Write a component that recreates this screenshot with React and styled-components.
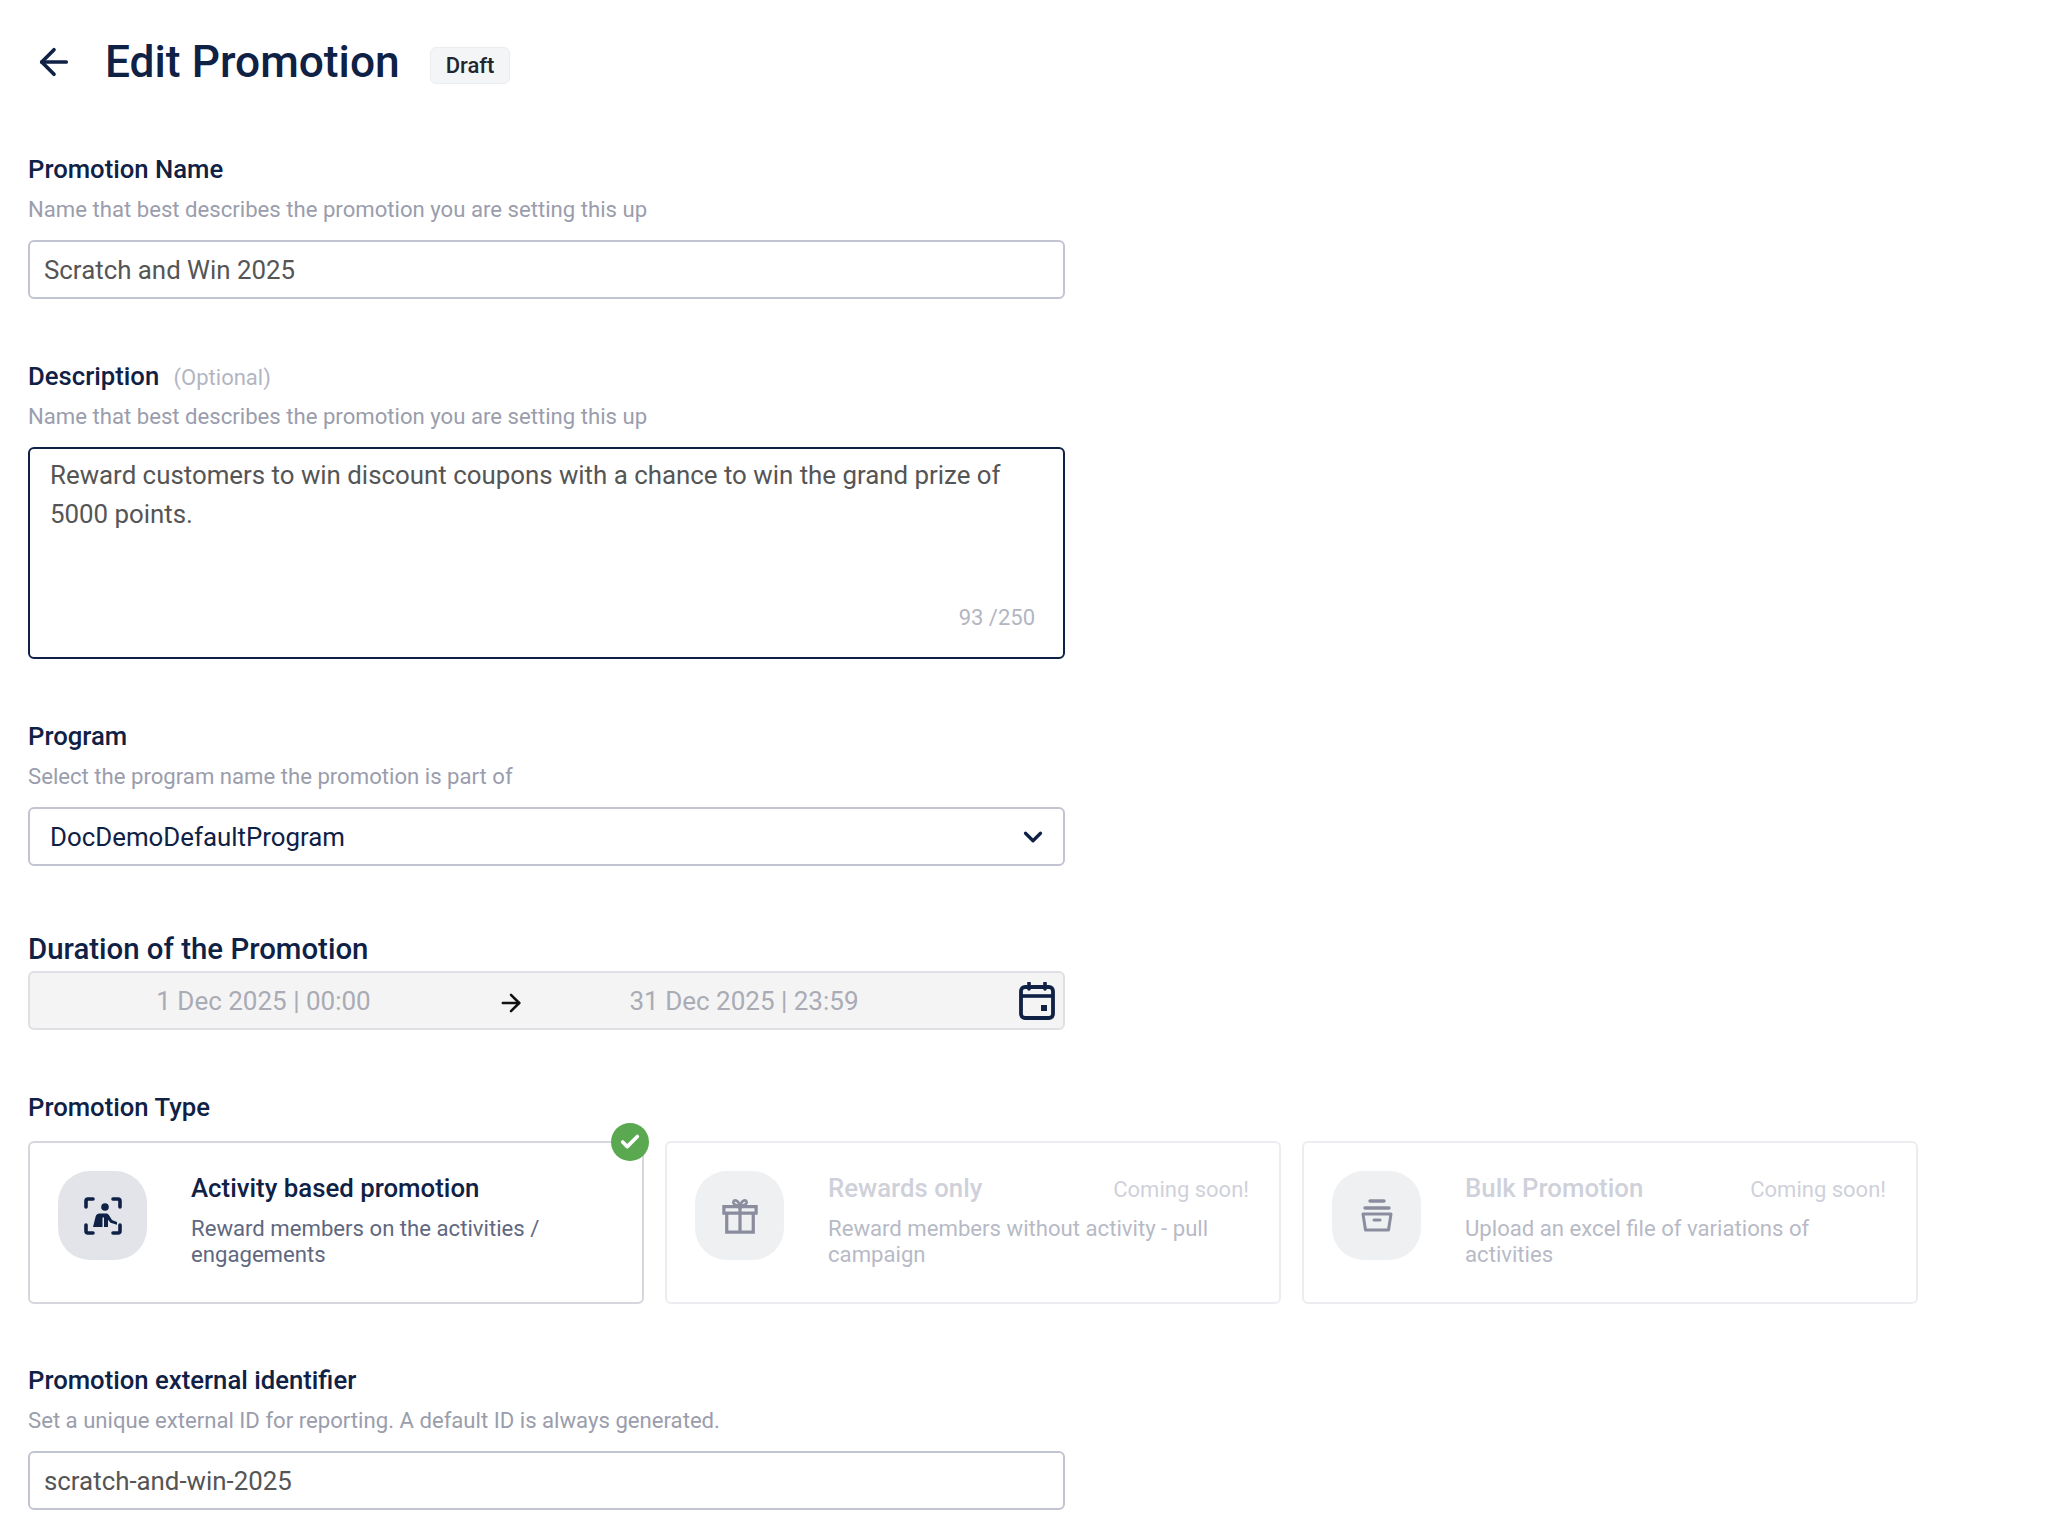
import React from 'react'
import styled, { createGlobalStyle } from 'styled-components'
import { ArrowLeft, ArrowRight, ChevronDown, Check } from 'lucide-react'

const GlobalStyle = createGlobalStyle`
  html, body {
    margin: 0;
    background: #fff;
    font-family: Roboto, "Liberation Sans", sans-serif;
  }
  * { box-sizing: border-box; }
`

const ActivityIcon = () => (
  <svg width="38" height="38" viewBox="0 0 38 38" fill="none">
    <path d="M2 10V4a2 2 0 0 1 2-2h5M29 2h5a2 2 0 0 1 2 2v6M2 28v6a2 2 0 0 0 2 2h5M29 36h5a2 2 0 0 0 2-2v-6" stroke="#0f2145" strokeWidth="3.6" strokeLinecap="round" />
    <circle cx="21" cy="10" r="3.800" fill="#0f2145" />
    <path d="M9 30l2.500-10c.4-2 2-3.500 4-3.500H22c1.400 0 2.400.6 3 1.800l3 4.700 5 2v2.800l-6.500-2-2.500-3V30h-4v-9.500h-1.500V30z" fill="#0f2145" />
  </svg>
)

const GiftIcon = () => (
  <svg width="36" height="38" viewBox="0 0 38 38" fill="none" stroke="#8b8d9f" strokeWidth="3.400">
    <path d="M2 9h34v7H2zM5 16v20h28V16M19 9v27" />
    <path d="M19 9c-2-1-7-1-7-4.500C12 1.500 17 1 19 9zM19 9c2-1 7-1 7-4.500C26 1.500 21 1 19 9z" strokeWidth="2.800" />
  </svg>
)

const ArchiveIcon = () => (
  <svg width="32" height="33" viewBox="0 0 32 33" fill="none" stroke="#8b8d9f" strokeLinecap="round">
    <path d="M9 2h14" strokeWidth="3.400" />
    <path d="M4 9h24" strokeWidth="3.400" />
    <path d="M2 15h28l-2.500 16h-23zM13 21h6" strokeWidth="3" strokeLinejoin="round" />
  </svg>
)

const CalendarIcon = () => (
  <svg width="36" height="38" viewBox="0 0 36 38" fill="none">
    <path d="M10 1v6M26 1v6" stroke="#0f2145" strokeWidth="3.600" strokeLinecap="round" />
    <rect x="2" y="5" width="32" height="31" rx="4" stroke="#0f2145" strokeWidth="3.800" />
    <path d="M2 14h32" stroke="#0f2145" strokeWidth="3.600" />
    <rect x="22" y="23" width="6" height="6" fill="#0f2145" />
  </svg>
)

const promotionTypes = [
  {
    title: 'Activity based promotion',
    text: 'Reward members on the activities / engagements',
    Icon: ActivityIcon,
    selected: true,
  },
  {
    title: 'Rewards only',
    text: 'Reward members without activity - pull campaign',
    Icon: GiftIcon,
  },
  {
    title: 'Bulk Promotion',
    text: 'Upload an excel file of variations of activities',
    Icon: ArchiveIcon,
  },
]

export default function App() {
  return (
    <Page>
      <GlobalStyle />
      <Header>
        <BackButton>
          <ArrowLeft size={42} strokeWidth={2.1} />
        </BackButton>
        <Title>Edit Promotion</Title>
        <Badge>Draft</Badge>
      </Header>

      <Form>
        <Field>
          <Label>Promotion Name</Label>
          <Hint>Name that best describes the promotion you are setting this up</Hint>
          <Input>Scratch and Win 2025</Input>
        </Field>

        <Field>
          <Label>
            Description <Optional>(Optional)</Optional>
          </Label>
          <Hint>Name that best describes the promotion you are setting this up</Hint>
          <TextArea>
            Reward customers to win discount coupons with a chance to win the grand prize of 5000 points.
            <Counter>93 /250</Counter>
          </TextArea>
        </Field>

        <Field>
          <Label>Program</Label>
          <Hint>Select the program name the promotion is part of</Hint>
          <Select>
            DocDemoDefaultProgram
            <ChevronDown size={30} strokeWidth={2.6} color="#0f2145" />
          </Select>
        </Field>

        <Field>
          <SectionLabel>Duration of the Promotion</SectionLabel>
          <DateBox>
            <DateText>1 Dec 2025 | 00:00</DateText>
            <DateArrow>
              <ArrowRight size={28} strokeWidth={2.2} color="#111" />
            </DateArrow>
            <DateText>31 Dec 2025 | 23:59</DateText>
            <CalendarIcon />
          </DateBox>
        </Field>

        <Field>
          <Label>Promotion Type</Label>
          <Cards>
            {promotionTypes.map(({ title, text, Icon, selected }) => (
              <Card key={title} $selected={selected}>
                {selected && (
                  <CheckMark>
                    <Check size={22} strokeWidth={4} color="#fff" />
                  </CheckMark>
                )}
                <IconTile $selected={selected}>
                  <Icon />
                </IconTile>
                <CardBody>
                  <CardHead>
                    <CardTitle $selected={selected}>{title}</CardTitle>
                    {!selected && <Soon>Coming soon!</Soon>}
                  </CardHead>
                  <CardText $selected={selected}>{text}</CardText>
                </CardBody>
              </Card>
            ))}
          </Cards>
        </Field>

        <ExternalField>
          <Label>Promotion external identifier</Label>
          <Hint>Set a unique external ID for reporting. A default ID is always generated.</Hint>
          <Input>scratch-and-win-2025</Input>
        </ExternalField>
      </Form>
    </Page>
  )
}

const Page = styled.div`
  width: 2048px;
  min-height: 1527px;
  padding: 40px 0 0 28px;
  background: #fff;
`
const Header = styled.div`
  display: flex;
  align-items: center;
  height: 44px;
  margin-bottom: 70px;
`
const BackButton = styled.div`
  display: flex;
  width: 77px;
  padding-left: 5px;
  color: #0f2145;
`
const Title = styled.h1`
  margin: 0;
  font-size: 44.300px;
  line-height: 44px;
  font-weight: 500;
  color: #0f2145;
`
const Badge = styled.span`
  display: flex;
  align-items: center;
  height: 37px;
  margin: 6px 0 0 30px;
  padding: 0 15px;
  border: 1px solid #ebedf0;
  border-radius: 6px;
  background: #f4f5f6;
  font-size: 22px;
  font-weight: 500;
  color: #22262e;
`
const Form = styled.div`
  display: flex;
  flex-direction: column;
  gap: 62px;
`
const Field = styled.div`
  display: flex;
  flex-direction: column;
`
const ExternalField = styled(Field)`
  margin-top: -1px;
`
const Label = styled.div`
  height: 30px;
  font-size: 25.700px;
  line-height: 30px;
  font-weight: 500;
  color: #0f2145;
`
const SectionLabel = styled(Label)`
  margin-top: 6px;
  font-size: 29.400px;
`
const Optional = styled.span`
  margin-left: 8px;
  font-size: 22px;
  font-weight: 400;
  color: #b3b5c2;
`
const Hint = styled.div`
  margin: 12px 0 18px;
  font-size: 22.150px;
  line-height: 26px;
  color: #9a9dac;
`
const Input = styled.div`
  display: flex;
  align-items: center;
  width: 1037px;
  height: 59px;
  padding: 0 14px;
  border: 2px solid #c3c4d1;
  border-radius: 6px;
  font-size: 25.850px;
  color: #555;
`
const TextArea = styled.div`
  position: relative;
  width: 1037px;
  height: 212px;
  padding: 7px 20px;
  border: 2px solid #0f2145;
  border-radius: 6px;
  font-size: 25.850px;
  line-height: 39px;
  color: #555;
`
const Counter = styled.span`
  position: absolute;
  right: 28px;
  bottom: 26px;
  font-size: 22px;
  line-height: 26px;
  color: #b3b5c2;
`
const Select = styled(Input)`
  justify-content: space-between;
  padding: 0 15px 0 20px;
  color: #0f2145;
`
const DateBox = styled.div`
  display: grid;
  grid-template-columns: 467px 28px 438px 1fr;
  align-items: center;
  width: 1037px;
  height: 59px;
  margin-top: 7px;
  padding-right: 8px;
  border: 2px solid #dfe0e4;
  border-radius: 6px;
  background: #f4f4f4;

  svg:last-child {
    justify-self: end;
  }
`
const DateText = styled.div`
  font-size: 26px;
  text-align: center;
  color: #a9abb5;
`
const DateArrow = styled.div`
  display: flex;
  width: 28px;
  margin-top: 4px;
`
const Cards = styled.div`
  display: grid;
  grid-template-columns: repeat(3, 616px);
  gap: 21px;
  margin-top: 19px;
`
const Card = styled.div`
  position: relative;
  display: flex;
  height: 163px;
  padding: 28px 30px 0 28px;
  border: 2px solid ${(p) => (p.$selected ? '#d6d7dc' : '#ecedf0')};
  border-radius: 6px;
`
const CheckMark = styled.div`
  position: absolute;
  top: -20px;
  right: -7px;
  display: flex;
  align-items: center;
  justify-content: center;
  width: 38px;
  height: 38px;
  border-radius: 50%;
  background: #5aa84f;
`
const IconTile = styled.div`
  display: flex;
  flex: none;
  align-items: center;
  justify-content: center;
  width: 89px;
  height: 89px;
  border-radius: 32px;
  background: ${(p) => (p.$selected ? '#e2e4ea' : '#eef0f2')};
`
const CardBody = styled.div`
  flex: 1;
  margin: 2px 0 0 44px;
`
const CardHead = styled.div`
  display: flex;
  justify-content: space-between;
  align-items: baseline;
  height: 30px;
  margin-bottom: 12px;
  line-height: 30px;
`
const CardTitle = styled.div`
  font-size: 25.800px;
  font-weight: 500;
  color: ${(p) => (p.$selected ? '#0f2145' : '#cfd1da')};
`
const Soon = styled.div`
  font-size: 22px;
  color: #cfd1da;
`
const CardText = styled.div`
  font-size: 22.150px;
  line-height: 26px;
  color: ${(p) => (p.$selected ? '#5f6880' : '#b7bac6')};
`
